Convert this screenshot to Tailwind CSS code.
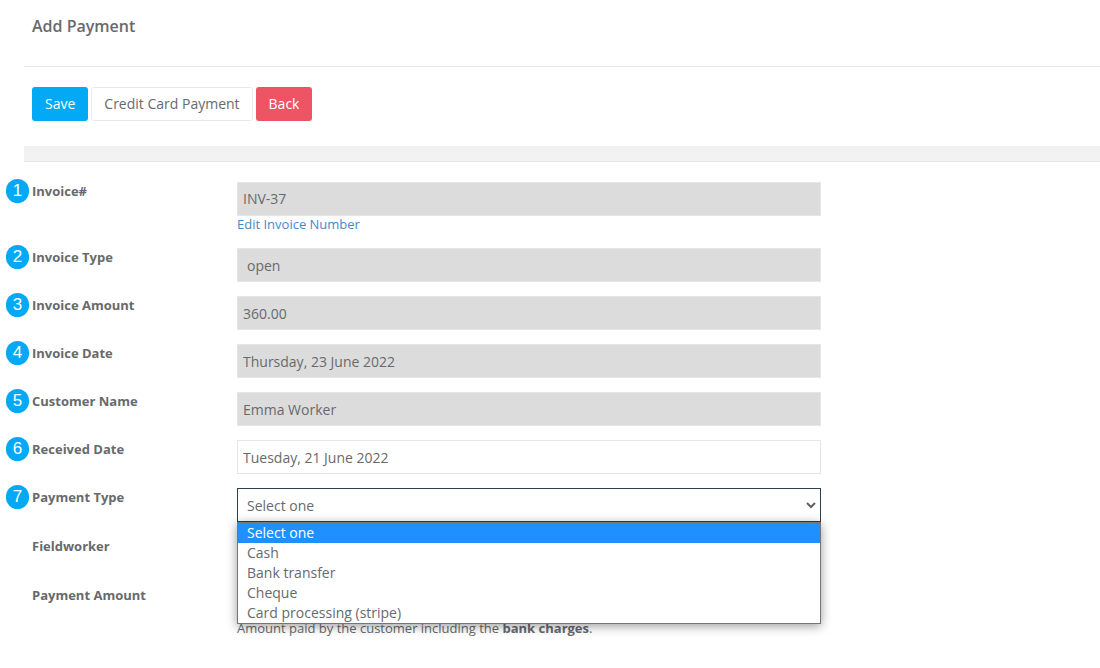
<!DOCTYPE html>
<html lang="en">
<head>
    <meta charset="UTF-8">
    <meta name="viewport" content="width=device-width, initial-scale=1.0">
    <title>Add Payment</title>
    <script src="https://cdn.jsdelivr.net/npm/@tailwindcss/browser@4"></script>
</head>
<body class="bg-white font-['Open_Sans',sans-serif] text-[13px] leading-[18px] text-[#676a6c]">
    <header class="ml-6">
        <div class="border-b border-[#e7eaec] px-2 pt-4 pb-[30px]">
            <h1 class="text-base leading-5 font-semibold">Add Payment</h1>
        </div>
        <div class="flex gap-[3px] px-2 pt-5 pb-[25px] text-sm">
            <button type="submit" form="payment-form" class="h-[34px] rounded-[3px] bg-[#03a9f4] px-[13px] text-white">Save</button>
            <button type="button" class="h-[34px] rounded-[3px] border border-[#e7eaec] bg-white px-3">Credit Card Payment</button>
            <button type="button" class="h-[34px] rounded-[3px] bg-[#ed5565] px-[13px] text-white">Back</button>
        </div>
        <div class="h-4 border-b border-[#e7e7e7] bg-[#f2f2f2]"></div>
    </header>

    <form id="payment-form" class="flex flex-col gap-[14px] pt-5 pl-1.5">
        <!-- Invoice details (read only) -->
        <div class="flex">
            <div class="flex h-[18px] w-[231px] items-center gap-[3px]">
                <span class="flex h-6 w-[23px] items-center justify-center rounded-full bg-[#03a9f4] font-['Liberation_Sans',sans-serif] text-[17px] text-white">1</span>
                <label for="invoice-number" class="font-bold">Invoice#</label>
            </div>
            <div class="flex max-w-[584px] flex-1 flex-col items-start">
                <input id="invoice-number" type="text" value="INV-37" readonly class="h-[34px] w-full border border-[#e5e6e7] bg-[#dcdcdc] px-[5px] pb-0.5 text-sm">
                <a href="#" class="mb-0.5 leading-4 text-[#428bca]">Edit Invoice Number</a>
            </div>
        </div>
        <div class="flex">
            <div class="flex h-[18px] w-[231px] items-center gap-[3px]">
                <span class="flex h-6 w-[23px] items-center justify-center rounded-full bg-[#03a9f4] font-['Liberation_Sans',sans-serif] text-[17px] text-white">2</span>
                <label for="invoice-type" class="font-bold">Invoice Type</label>
            </div>
            <select id="invoice-type" disabled class="h-[34px] max-w-[584px] flex-1 appearance-none border border-[#e5e6e7] bg-[#dcdcdc] px-[9px] pt-0.5 text-sm opacity-100">
                <option>open</option>
            </select>
        </div>
        <div class="flex">
            <div class="flex h-[18px] w-[231px] items-center gap-[3px]">
                <span class="flex h-6 w-[23px] items-center justify-center rounded-full bg-[#03a9f4] font-['Liberation_Sans',sans-serif] text-[17px] text-white">3</span>
                <label for="invoice-amount" class="font-bold">Invoice Amount</label>
            </div>
            <input id="invoice-amount" type="text" value="360.00" readonly class="h-[34px] max-w-[584px] flex-1 border border-[#e5e6e7] bg-[#dcdcdc] px-[5px] text-sm">
        </div>
        <div class="flex">
            <div class="flex h-[18px] w-[231px] items-center gap-[3px]">
                <span class="flex h-6 w-[23px] items-center justify-center rounded-full bg-[#03a9f4] font-['Liberation_Sans',sans-serif] text-[17px] text-white">4</span>
                <label for="invoice-date" class="font-bold">Invoice Date</label>
            </div>
            <input id="invoice-date" type="text" value="Thursday, 23 June 2022" readonly class="h-[34px] max-w-[584px] flex-1 border border-[#e5e6e7] bg-[#dcdcdc] px-[5px] text-sm">
        </div>
        <div class="flex">
            <div class="flex h-[18px] w-[231px] items-center gap-[3px]">
                <span class="flex h-6 w-[23px] items-center justify-center rounded-full bg-[#03a9f4] font-['Liberation_Sans',sans-serif] text-[17px] text-white">5</span>
                <label for="customer-name" class="font-bold">Customer Name</label>
            </div>
            <input id="customer-name" type="text" value="Emma Worker" readonly class="h-[34px] max-w-[584px] flex-1 border border-[#e5e6e7] bg-[#dcdcdc] px-[5px] text-sm">
        </div>

        <!-- Payment details -->
        <div class="flex">
            <div class="flex h-[18px] w-[231px] items-center gap-[3px]">
                <span class="flex h-6 w-[23px] items-center justify-center rounded-full bg-[#03a9f4] font-['Liberation_Sans',sans-serif] text-[17px] text-white">6</span>
                <label for="received-date" class="font-bold">Received Date</label>
            </div>
            <input id="received-date" type="text" value="Tuesday, 21 June 2022" class="h-[34px] max-w-[584px] flex-1 border border-[#e5e6e7] bg-white px-[5px] text-sm">
        </div>
        <div class="flex">
            <div class="flex h-[18px] w-[231px] items-center gap-[3px]">
                <span class="flex h-6 w-[23px] items-center justify-center rounded-full bg-[#03a9f4] font-['Liberation_Sans',sans-serif] text-[17px] text-white">7</span>
                <label for="payment-type" class="font-bold">Payment Type</label>
            </div>
            <div class="relative max-w-[584px] flex-1 pb-px">
                <select id="payment-type" class="block h-[34px] w-full appearance-none border border-[#2f4050] bg-white px-[9px] pt-0.5 text-sm">
                    <option>Select one</option>
                    <option>Cash</option>
                    <option>Bank transfer</option>
                    <option>Cheque</option>
                    <option>Card processing (stripe)</option>
                </select>
                <svg class="pointer-events-none absolute top-3 right-1 h-[10px] w-3" viewBox="0 0 12 10" fill="none" stroke="#5f6163" stroke-width="2"><path d="M2 3l4 4 4-4"/></svg>
                <ul role="listbox" aria-label="Payment Type" class="absolute inset-x-0 top-[34px] z-10 border border-[#767676] bg-white text-sm leading-5 shadow-[0_2px_10px_rgba(0,0,0,0.4)]">
                    <li role="option" aria-selected="true" class="bg-[#1e90ff] px-[9px] text-white">Select one</li>
                    <li role="option" class="px-[9px]">Cash</li>
                    <li role="option" class="px-[9px]">Bank transfer</li>
                    <li role="option" class="px-[9px]">Cheque</li>
                    <li role="option" class="px-[9px]">Card processing (stripe)</li>
                </ul>
            </div>
        </div>
        <div class="flex pb-px">
            <div class="w-[231px] pl-[26px]">
                <label for="fieldworker" class="font-bold">Fieldworker</label>
            </div>
            <select id="fieldworker" class="h-[34px] max-w-[584px] flex-1 appearance-none border border-[#e5e6e7] bg-white px-[9px] pt-0.5 text-sm">
                <option></option>
            </select>
        </div>
        <div class="flex">
            <div class="w-[231px] pl-[26px]">
                <label for="payment-amount" class="font-bold">Payment Amount</label>
            </div>
            <div class="max-w-[584px] flex-1">
                <input id="payment-amount" type="text" class="block h-[34px] w-full border border-[#e5e6e7] bg-white px-[5px] text-sm">
                <p class="leading-4">Amount paid by the customer including the <strong>bank charges</strong>.</p>
            </div>
        </div>
    </form>
</body>
</html>
